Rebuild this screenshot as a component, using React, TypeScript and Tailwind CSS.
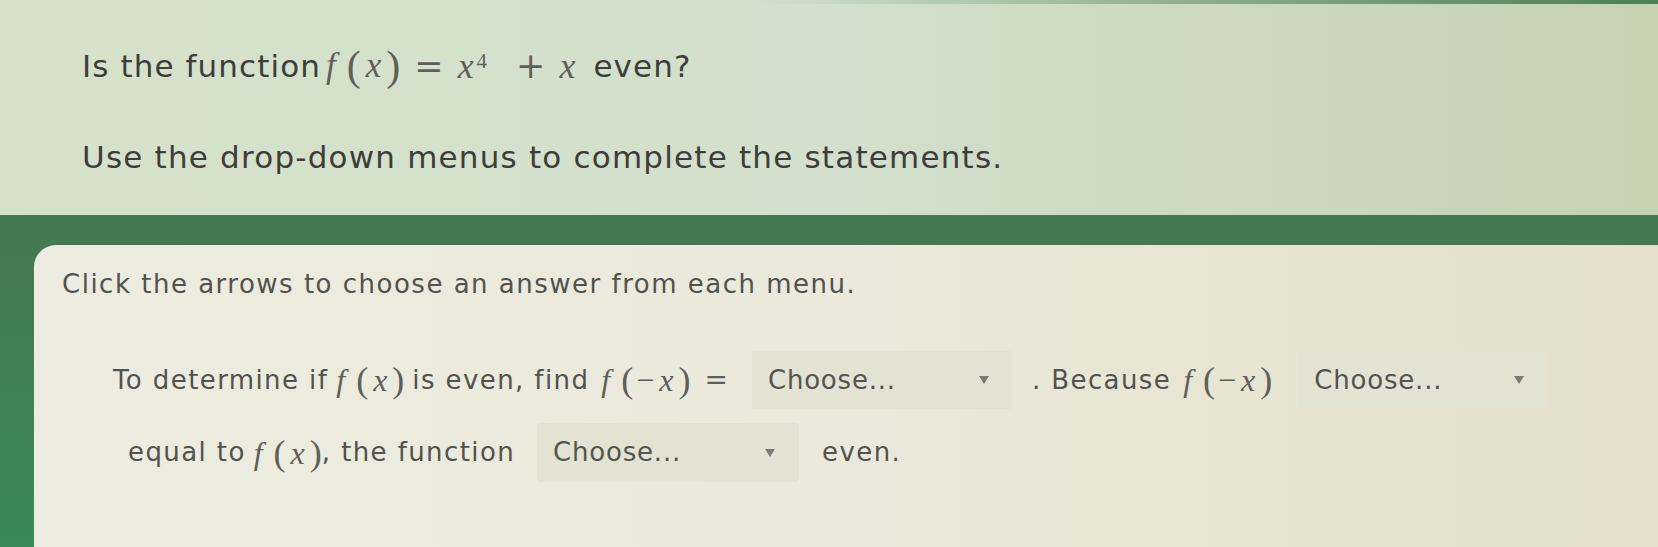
import React from "react";

const MATH = "font-['Liberation_Serif','DejaVu_Serif',serif] text-[#5e5e5a] tracking-normal";
const OP = "font-['DejaVu_Serif','Liberation_Serif',serif] text-[#5e5e5a] tracking-normal";

// f(x) / f(−x) drawn like a typeset formula: italic letters, tall parens
function Fn({ neg = false, big = false }: { neg?: boolean; big?: boolean }) {
  return (
    <span className={`${MATH} inline-flex items-center ${big ? "text-[35px]" : "text-[32px]"}`}>
      <i>f</i>
      <span className={`ml-[11px] ${big ? "text-[42px]" : "text-[36px]"} leading-none`}>(</span>
      {neg && <span className="ml-[3px]">−</span>}
      <i className="mx-[5px]">x</i>
      <span className={`${big ? "text-[42px]" : "text-[36px]"} leading-none`}>)</span>
    </span>
  );
}

function Dropdown({ className }: { className: string }) {
  return (
    <div
      className={`flex items-center justify-between rounded-[3px] bg-[#e2e3d3] pl-[16px] pr-[24px] text-[26px] tracking-[0.8px] text-[#545450] ${className}`}
    >
      <span>Choose...</span>
      <svg width="10" height="8" viewBox="0 0 10 8">
        <path d="M0 0h10L5 8z" fill="#7b7b74" />
      </svg>
    </div>
  );
}

export default function App() {
  return (
    <div className="relative h-[547px] w-[1658px] overflow-hidden font-['DejaVu_Sans','Open_Sans',sans-serif]">
      {/* Question header */}
      <div className="relative h-[215px] bg-gradient-to-r from-[#d6e2c9] via-[#d2e0cd] to-[#c6d2b2] pl-[82px] pt-[46px] text-[#3d3d3a]">
        <div className="absolute right-0 top-0 h-[4px] w-[900px] bg-gradient-to-r from-transparent to-[#4c7f57]" />
        <div className="flex h-[40px] items-center text-[31px] tracking-[1.1px]">
          <span>Is the function</span>
          <span className="ml-[5px]">
            <Fn big />
          </span>
          <span className={`${OP} ml-[14px] text-[35px]`}>=</span>
          <span className={`${MATH} ml-[14px] text-[36px]`}>
            <i>x</i>
            <sup className="ml-[3px] text-[21px]">4</sup>
          </span>
          <span className={`${OP} ml-[29px] text-[35px]`}>+</span>
          <span className={`${MATH} ml-[14px] text-[36px]`}>
            <i>x</i>
          </span>
          <span className="ml-[18px]">even?</span>
        </div>
        <div className="mt-[51px] h-[40px] text-[31px] leading-[40px] tracking-[1.2px]">
          Use the drop-down menus to complete the statements.
        </div>
      </div>

      {/* Answer panel */}
      <div className="flex h-[332px] flex-col bg-gradient-to-b from-[#447a52] from-[10%] to-[#3a8957] pl-[34px] pt-[30px]">
        <div className="flex-1 rounded-tl-[22px] bg-gradient-to-r from-[#ecece0] via-[#eae9db] to-[#e5dfc9] pt-[22px] text-[#52524e]">
          <div className="ml-[28px] h-[34px] text-[26px] leading-[34px] tracking-[1.5px]">
            Click the arrows to choose an answer from each menu.
          </div>

          <div className="ml-[79px] mt-[50px] flex h-[58px] items-center text-[26px] tracking-[1.4px]">
            <span>To determine if</span>
            <span className="ml-[8px]">
              <Fn />
            </span>
            <span className="ml-[8px]">is even, find</span>
            <span className="ml-[12px]">
              <Fn neg />
            </span>
            <span className={`${OP} ml-[14px] text-[28px]`}>=</span>
            <Dropdown className="ml-[24px] h-[58px] w-[261px]" />
            <span className="ml-[19px]">. Because</span>
            <span className="ml-[12px]">
              <Fn neg />
            </span>
            <Dropdown className="ml-[26px] h-[58px] w-[250px]" />
          </div>

          <div className="ml-[94px] mt-[14px] flex h-[59px] items-center text-[26px] tracking-[1.4px]">
            <span>equal to</span>
            <span className="ml-[8px]">
              <Fn />
            </span>
            <span>, the function</span>
            <Dropdown className="ml-[22px] h-[59px] w-[262px]" />
            <span className="ml-[23px]">even.</span>
          </div>
        </div>
      </div>
    </div>
  );
}
